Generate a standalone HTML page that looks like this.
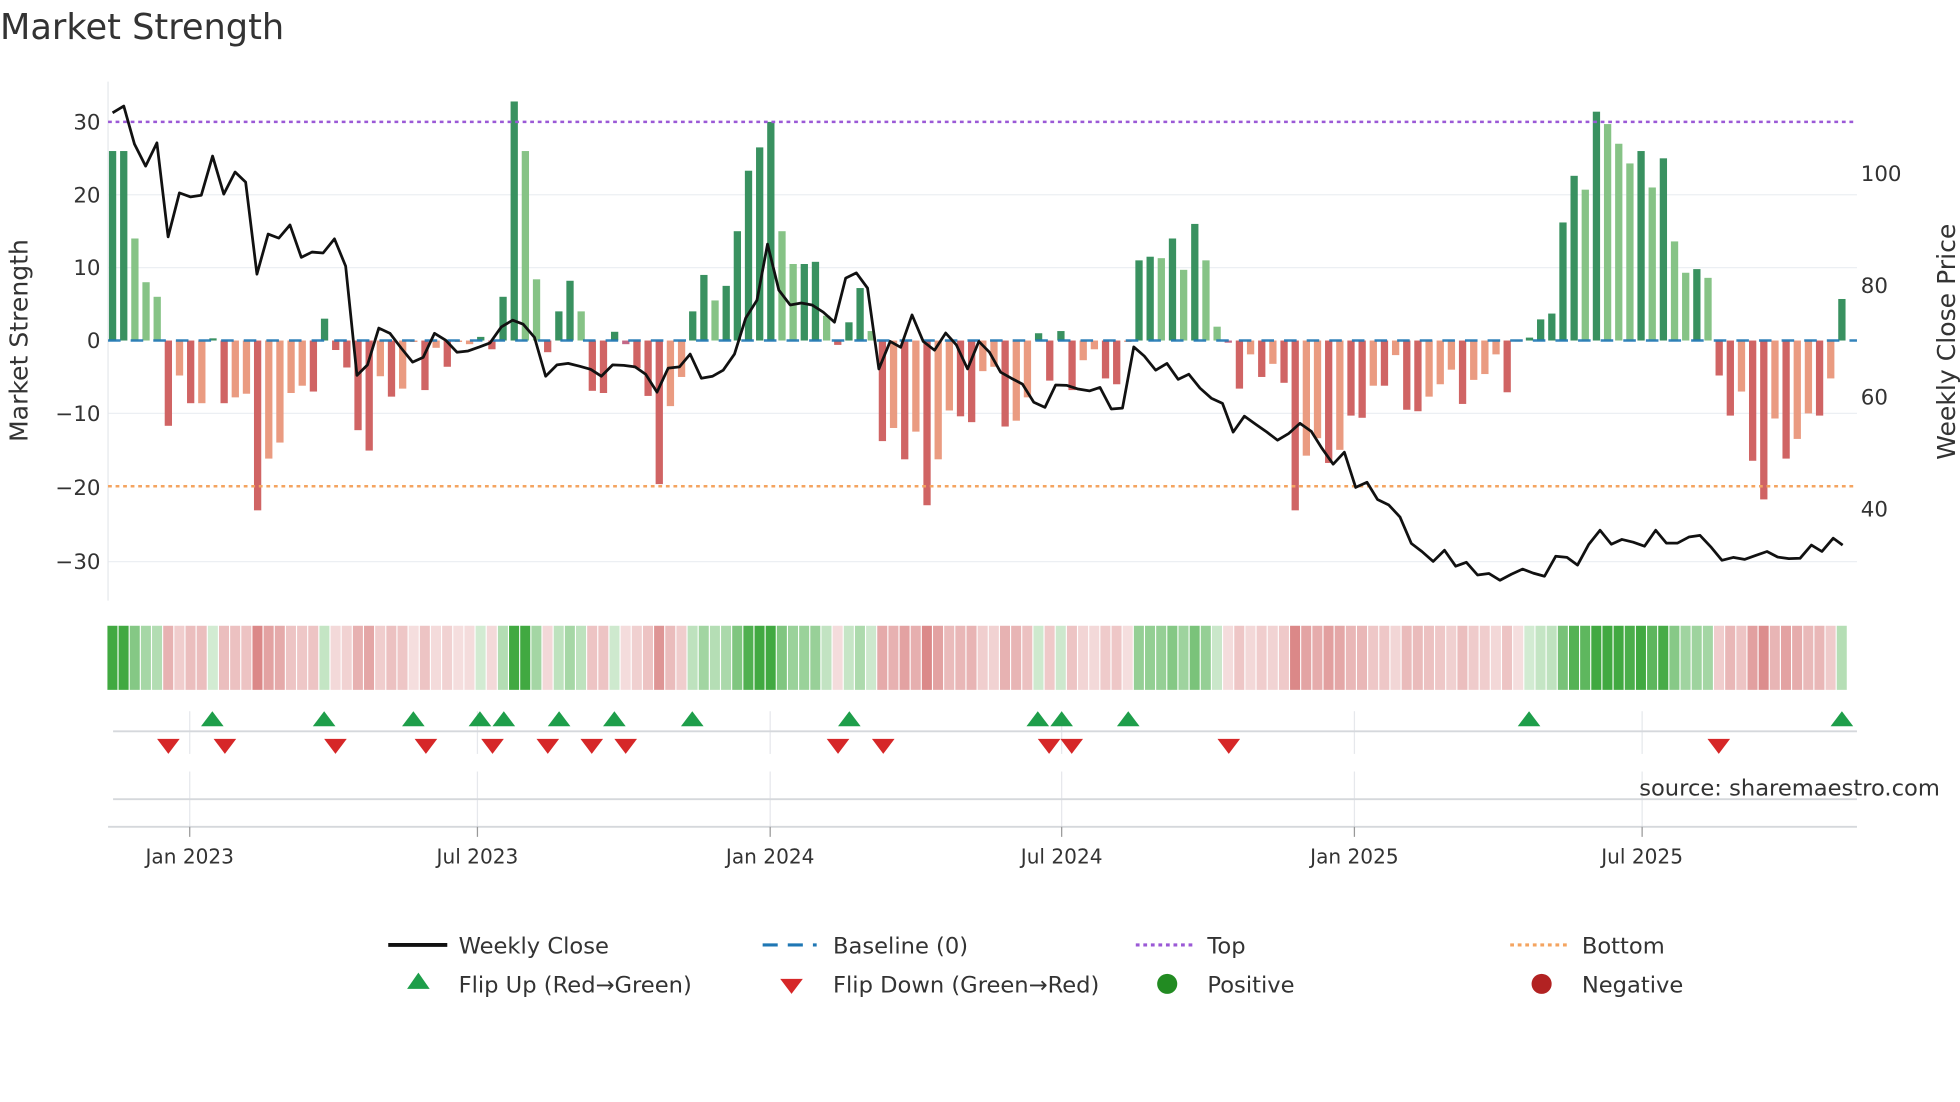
<!DOCTYPE html>
<html><head><meta charset="utf-8">
<style>
html,body{margin:0;padding:0;background:#fff;}
svg{display:block;}
text{font-family:"DejaVu Sans","Liberation Sans",sans-serif;fill:#333;}
</style></head>
<body>
<svg id="s" width="1960" height="1102" viewBox="0 0 1560 877" preserveAspectRatio="none" xmlns="http://www.w3.org/2000/svg">
<rect width="1560" height="877" fill="#fff"/>
<text x="0" y="31" font-size="28" fill="#333">Market Strength</text>
<g stroke="#eceff3" stroke-width="1">
<line x1="86" x2="1478" y1="155" y2="155"/>
<line x1="86" x2="1478" y1="213" y2="213"/>
<line x1="86" x2="1478" y1="329" y2="329"/>
<line x1="86" x2="1478" y1="447" y2="447"/>
</g>
<line x1="86" x2="86" y1="65" y2="478" stroke="#e6e8ec" stroke-width="1"/>
<g id="bars"></g>
<line x1="86" x2="1478" y1="271" y2="271" stroke="#1f77b4" stroke-width="2" stroke-dasharray="10,8" opacity="0.9"/>
<line x1="86" x2="1478" y1="97" y2="97" stroke="#9b59d6" stroke-width="2" stroke-dasharray="3,3"/>
<line x1="86" x2="1478" y1="387" y2="387" stroke="#f4a460" stroke-width="2" stroke-dasharray="3,3"/>
<polyline id="price" fill="none" stroke="#111" stroke-width="2.2" stroke-linejoin="round"/>
<g font-size="17" text-anchor="end">
<text x="80" y="103">30</text><text x="80" y="161">20</text><text x="80" y="219">10</text>
<text x="80" y="277">0</text><text x="80" y="335">−10</text><text x="80" y="394">−20</text><text x="80" y="453">−30</text>
</g>
<g font-size="17">
<text x="1481" y="144">100</text><text x="1481" y="233">80</text><text x="1481" y="322">60</text><text x="1481" y="411">40</text>
</g>
<text transform="translate(22,271) rotate(-90)" font-size="20" text-anchor="middle">Market Strength</text>
<text transform="translate(1556,272) rotate(-90)" font-size="20" text-anchor="middle">Weekly Close Price</text>
<g id="heat"></g>
<g stroke="#e6e8ec" stroke-width="1">
<line x1="151" x2="151" y1="566" y2="600"/><line x1="380" x2="380" y1="566" y2="600"/>
<line x1="613" x2="613" y1="566" y2="600"/><line x1="845" x2="845" y1="566" y2="600"/>
<line x1="1078" x2="1078" y1="566" y2="600"/><line x1="1307" x2="1307" y1="566" y2="600"/>
<line x1="151" x2="151" y1="614" y2="660"/><line x1="380" x2="380" y1="614" y2="660"/>
<line x1="613" x2="613" y1="614" y2="660"/><line x1="845" x2="845" y1="614" y2="660"/>
<line x1="1078" x2="1078" y1="614" y2="660"/><line x1="1307" x2="1307" y1="614" y2="660"/>
</g>
<line x1="90" x2="1478" y1="582" y2="582" stroke="#d5d8dc" stroke-width="1.5"/>
<line x1="90" x2="1478" y1="636" y2="636" stroke="#d5d8dc" stroke-width="1.5"/>
<line x1="86" x2="1478" y1="658" y2="658" stroke="#d5d8dc" stroke-width="1.5"/>
<g stroke="#999" stroke-width="1">
<line x1="151" x2="151" y1="658" y2="666"/><line x1="380" x2="380" y1="658" y2="666"/>
<line x1="613" x2="613" y1="658" y2="666"/><line x1="845" x2="845" y1="658" y2="666"/>
<line x1="1078" x2="1078" y1="658" y2="666"/><line x1="1307" x2="1307" y1="658" y2="666"/>
</g>
<g id="marks"></g>
<text x="1544" y="633" font-size="18" text-anchor="end" fill="#888">source: sharemaestro.com</text>
<g font-size="16" text-anchor="middle">
<text x="151" y="687">Jan 2023</text><text x="380" y="687">Jul 2023</text><text x="613" y="687">Jan 2024</text>
<text x="845" y="687">Jul 2024</text><text x="1078" y="687">Jan 2025</text><text x="1307" y="687">Jul 2025</text>
</g>
<g font-size="18">
<line x1="309" x2="356" y1="752" y2="752" stroke="#111" stroke-width="3"/>
<text x="365" y="759">Weekly Close</text>
<line x1="607" x2="650" y1="752" y2="752" stroke="#1f77b4" stroke-width="2.5" stroke-dasharray="12,8"/>
<text x="663" y="759">Baseline (0)</text>
<line x1="904" x2="950" y1="752" y2="752" stroke="#9b59d6" stroke-width="2.5" stroke-dasharray="3,3"/>
<text x="961" y="759">Top</text>
<line x1="1202" x2="1248" y1="752" y2="752" stroke="#f4a460" stroke-width="2.5" stroke-dasharray="3,3"/>
<text x="1259" y="759">Bottom</text>
<polygon points="333,774 342,787 324,787" fill="#1e9e4a"/>
<text x="365" y="790">Flip Up (Red→Green)</text>
<polygon points="621,779 639,779 630,791" fill="#d62728"/>
<text x="663" y="790">Flip Down (Green→Red)</text>
<circle cx="929" cy="783" r="8" fill="#228b22"/>
<text x="961" y="790">Positive</text>
<circle cx="1227" cy="783" r="8" fill="#b22222"/>
<text x="1259" y="790">Negative</text>
</g>
</svg>
<script>
var NS="http://www.w3.org/2000/svg";
var d="D26 D26 L14 L8 L6 R-11.7 O-4.8 R-8.6 O-8.6 D0.3 R-8.6 O-7.8 O-7.3 R-23.3 O-16.2 O-14 O-7.2 O-6.2 R-7 D3 R-1.3 R-3.7 R-12.3 R-15.1 O-4.9 R-7.7 O-6.6 O-0.2 R-6.8 O-1 R-3.6 O-0.2 O-0.5 D0.5 R-1.2 D6 D32.8 L26 L8.4 R-1.6 D4 D8.2 L4 R-6.9 R-7.2 D1.2 P-0.5 R-3.8 R-7.6 R-19.7 O-9 O-5 D4 D9 L5.5 D7.5 D15 D23.3 D26.5 D30 L15 L10.5 D10.5 D10.8 L3.4 R-0.6 D2.5 D7.2 L1.3 R-13.8 O-12 R-16.3 O-12.5 R-22.6 O-16.3 O-9.6 R-10.4 R-11.2 O-4.2 O-3.6 R-11.8 O-11 O-7.8 D1 R-5.5 D1.3 R-6.8 O-2.7 O-1.2 R-5.2 R-6 O-0.2 D11 D11.5 L11.3 D14 L9.7 D16 L11 L1.9 P-0.3 R-6.6 O-1.9 R-5 O-3.2 R-5.8 R-23.3 O-15.8 O-13.4 R-16.8 O-15 R-10.3 R-10.6 O-6.2 R-6.2 O-2 R-9.5 R-9.7 O-7.7 O-6 O-4 R-8.7 O-5.4 O-4.6 O-1.9 R-7.1 O-0.1 D0.4 D2.9 D3.7 D16.2 D22.6 L20.7 D31.4 L29.7 L27 L24.3 D26 L21 D25 L13.6 L9.3 D9.8 L8.6 R-4.8 R-10.3 O-7 R-16.5 R-21.8 O-10.7 R-16.2 O-13.5 O-10 R-10.3 O-5.2 D5.7".split(" ");
var col={D:"#2e8b57",L:"#80c080",R:"#cd5c5c",O:"#e9967a",P:"#c06080"};
var bars=document.getElementById("bars"),heat=document.getElementById("heat");
var step=(1466-89.6)/(d.length-1);
d.forEach(function(s,i){
 var c=s[0],v=parseFloat(s.slice(1));var x=89.6+i*step;
 var r=document.createElementNS(NS,"rect");
 var y0=271,y1=271-5.8*v;
 r.setAttribute("x",(x-2.9).toFixed(2));r.setAttribute("width","5.8");
 r.setAttribute("y",Math.min(y0,y1).toFixed(2));r.setAttribute("height",Math.max(0.8,Math.abs(y1-y0)).toFixed(2));
 r.setAttribute("fill",col[c]);r.setAttribute("opacity","0.95");
 bars.appendChild(r);
 var h=document.createElementNS(NS,"rect");
 h.setAttribute("x",(x-4.1).toFixed(2));h.setAttribute("width",(step-0.9).toFixed(2));
 h.setAttribute("y","498");h.setAttribute("height","51");
 h.setAttribute("fill",v>0?"#2ca02c":"#cd5c5c");h.setAttribute("fill-opacity",(v>0?0.2+Math.min(1,v/26)*0.7:0.2+Math.min(1,-v/24)*0.55).toFixed(2));
 heat.appendChild(h);
});
var p1=[[180,282],[198,265],[215,360],[233,415],[251,357],[269,592],[287,482],[305,492],[322,488],[340,390],[358,485],[376,430],[393,455],[411,685],[429,585],[446,595],[464,562],[482,643],[499,630],[517,632],[535,597],[553,665],[571,938],[588,912],[606,820],[624,833],[642,870],[660,905],[677,893],[695,833],[713,850],[731,880],[749,877],[767,867],[784,857],[802,817],[820,800],[837,810],[855,843],[873,940],[891,912],[909,908],[927,915],[945,923],[962,940],[980,912],[998,913],[1016,917],[1033,935],[1051,980],[1069,920],[1087,917],[1104,885],[1122,945],[1140,940],[1157,925],[1175,885],[1193,795],[1211,750],[1228,610],[1246,725],[1264,762],[1282,757],[1299,762],[1317,780],[1335,805],[1353,695],[1370,682],[1388,720],[1406,922],[1424,853],[1441,868],[1459,787],[1477,853],[1495,875],[1513,832],[1530,862],[1548,922],[1566,853]];
var p2=[[15,880],[33,930],[50,945],[68,960],[86,1005],[104,1018],[121,962],[139,963],[157,972],[175,977],[192,968],[210,1022],[228,1020],[246,867],[263,890],[281,925],[299,908],[317,948],[334,935],[352,970],[370,995],[388,1008],[405,1080],[423,1040],[441,1060],[459,1080],[476,1100],[494,1083],[512,1058],[530,1078],[547,1120],[565,1160],[583,1130],[601,1218],[619,1205],[636,1248],[654,1262],[672,1292],[690,1358],[707,1378],[725,1403],[743,1375],[761,1415],[778,1405],[796,1437],[814,1433],[832,1450],[850,1435],[868,1422],[885,1432],[903,1440],[921,1390],[939,1393],[956,1412],[974,1360],[992,1325],[1010,1360],[1027,1348],[1045,1355],[1063,1365],[1081,1325],[1098,1357],[1116,1357],[1134,1342],[1152,1338],[1170,1368],[1187,1400],[1205,1393],[1223,1398],[1241,1388],[1259,1378],[1276,1392],[1294,1396],[1312,1395],[1330,1362],[1347,1378],[1365,1345],[1380,1362]];
var kx=2.01,ky=3.14,pts=[];
p1.forEach(function(p){pts.push((p[0]/kx).toFixed(1)+","+(p[1]/ky).toFixed(1));});
p2.forEach(function(p){pts.push((780+p[0]/kx).toFixed(1)+","+(p[1]/ky).toFixed(1));});
document.getElementById("price").setAttribute("points",pts.join(" "));
var marks=document.getElementById("marks");
[169,258,329,382,401,445,489,551,676,826,845,898,1217,1466].forEach(function(x){
 var t=document.createElementNS(NS,"polygon");t.setAttribute("points",x+",566 "+(x+9)+",578 "+(x-9)+",578");t.setAttribute("fill","#1e9e4a");marks.appendChild(t);});
[134,179,267,339,392,436,471,498,667,703,835,853,978,1368].forEach(function(x){
 var t=document.createElementNS(NS,"polygon");t.setAttribute("points",(x-9)+",588 "+(x+9)+",588 "+x+",600");t.setAttribute("fill","#d62728");marks.appendChild(t);});
</script>
</body></html>
